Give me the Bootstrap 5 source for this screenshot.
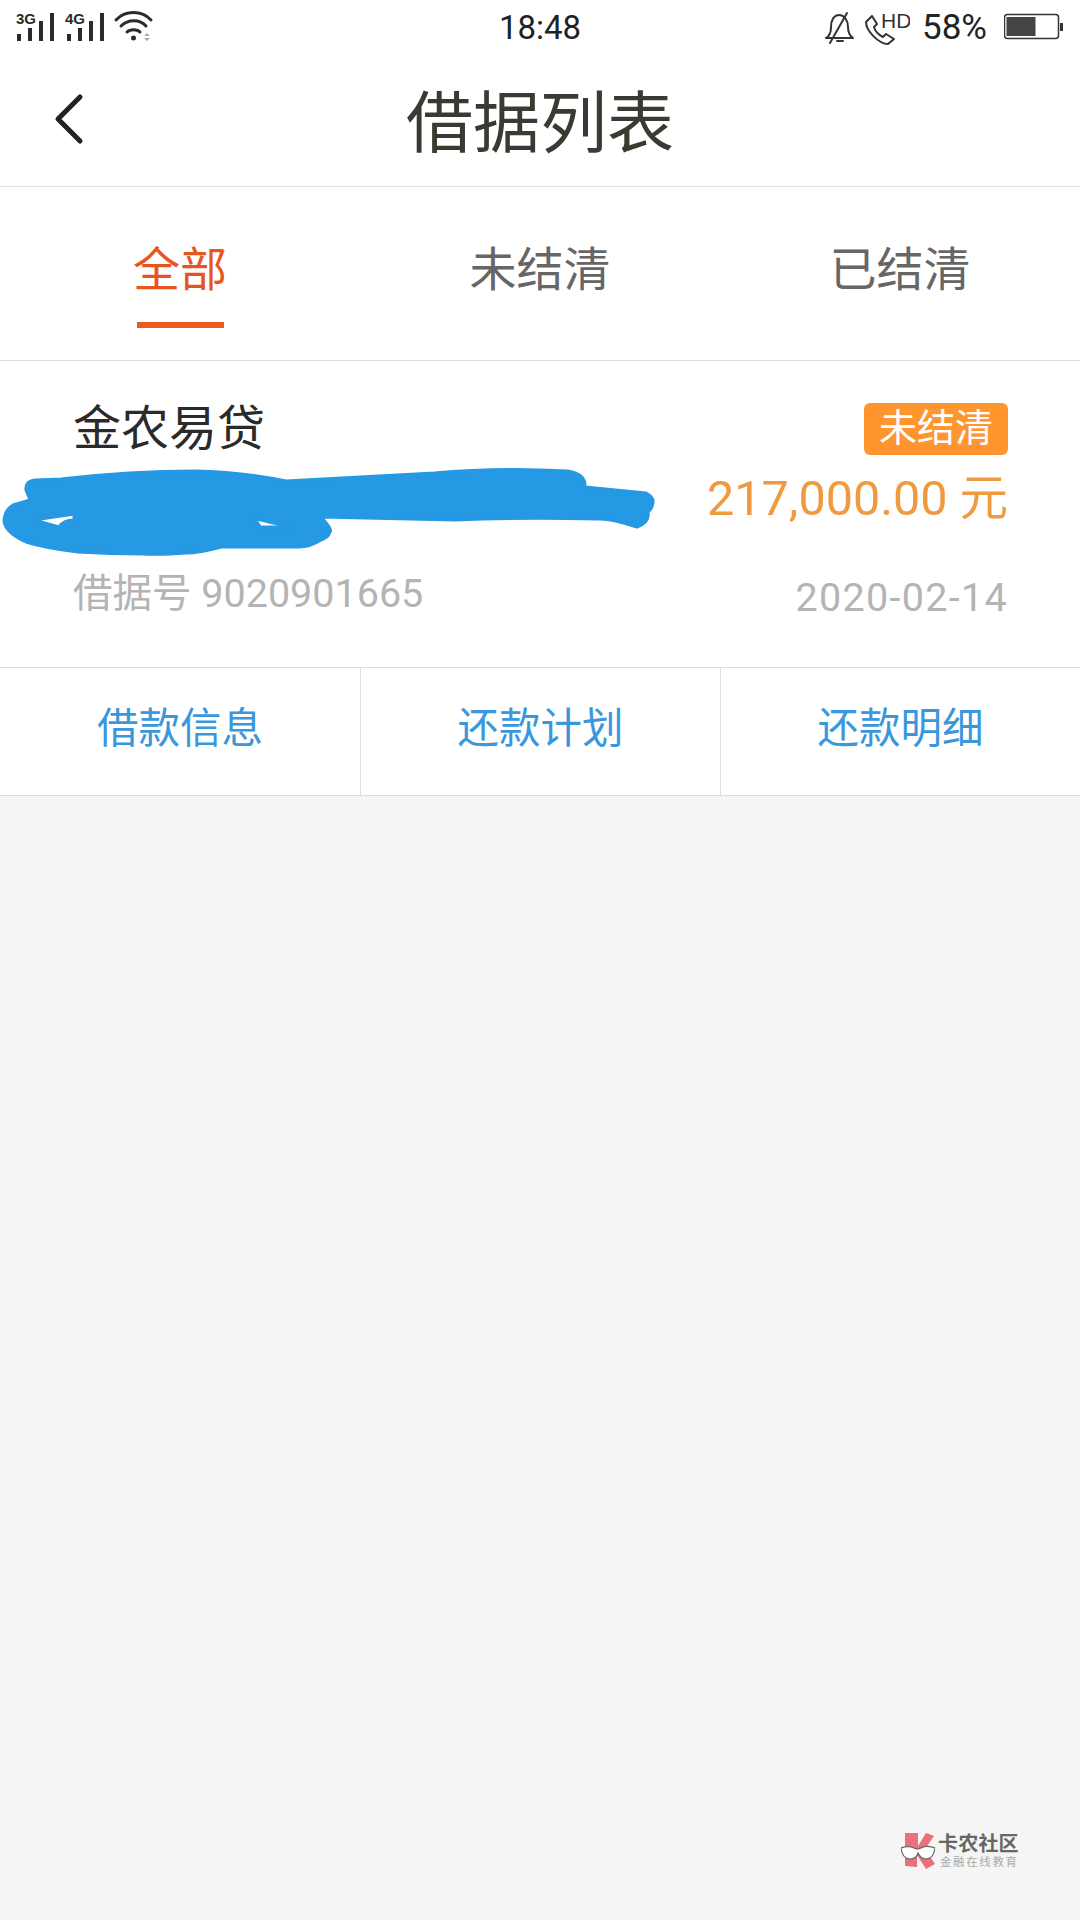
<!DOCTYPE html>
<html lang="zh-CN">
<head>
    <meta charset="UTF-8">
    <meta name="viewport" content="width=device-width, initial-scale=1.0">
    <title>借据列表</title>
    <link href="https://cdn.jsdelivr.net/npm/bootstrap@5.3.0/dist/css/bootstrap.min.css" rel="stylesheet">
    <style>
        body { width: 1080px; height: 1920px; background: #f5f5f5; overflow: hidden; position: relative;
            font-family: Roboto, "Noto Sans CJK SC", sans-serif; }
        .status-bar { height: 55px; background: #fff; color: #222; }
        .status-left { width: 360px; padding-left: 16px; }
        .status-time { width: 360px; font-size: 33px; line-height: 62px; text-align: center; }
        .status-right { width: 360px; padding-right: 16px; }
        .status-pct { font-size: 35px; line-height: 55px; margin: 0 17px 0 12px; }
        .title-bar { height: 132px; background: #fff; border-bottom: 1px solid #e2e2e2; position: relative; }
        .title-bar h1 { font-size: 67px; font-weight: 400; color: #3a3a32; margin: 0; line-height: 138px; text-align: center; }
        .back-btn { position: absolute; left: 50px; top: 36px; }
        .tab-bar { height: 174px; background: #fff; border-bottom: 1px solid #dedede; }
        .tab-item { width: 360px; height: 100%; font-size: 47px; color: #666; text-align: center; padding-top: 53px; line-height: 60px; position: relative; }
        .tab-item.on { color: #e8551f; }
        .tab-item.on::after { content: ""; position: absolute; left: 137px; width: 87px; top: 135px; height: 6px; background: #ee5a1e; }
        .loan-box { height: 307px; background: #fff; border-bottom: 1px solid #dedede; padding: 41px 72px 0 73px; }
        .loan-name { font-size: 48px; line-height: 54px; color: #2a2a2a; }
        .loan-tag { height: 52px; width: 144px; background: #ff952f; color: #fff; font-size: 38px; line-height: 50px; text-align: center; border-radius: 6px; }
        .loan-amt { font-size: 48.5px; line-height: 60px; color: #ef9a3e; margin-top: 13px; }
        .loan-meta { font-size: 39.5px; line-height: 50px; color: #b4b4b4; margin-top: 40px; }
        .loan-date { letter-spacing: 1.3px; position: relative; top: 4px; }
        .action-bar { height: 128px; background: #fff; border-bottom: 1px solid #dedede; }
        .action-item { flex: 1; font-size: 41.5px; color: #3b97dc; line-height: 122px; text-align: center; border-right: 1px solid #dedede; }
        .action-item:first-child { flex: 0 0 361px; }
        .action-item:last-child { border-right: 0; }
        .scribble { position: absolute; left: 0; top: 0; pointer-events: none; }
        .wm { position: absolute; left: 901px; top: 1831px; gap: 3px; }
        .wm-a { font-size: 20px; line-height: 22px; font-weight: 700; color: #666; letter-spacing: .2px; }
        .wm-b { font-size: 11.5px; line-height: 14px; color: #aaa; letter-spacing: 1.6px; white-space: nowrap; padding-left: 2px; }
    </style>
</head>
<body>
    <div class="status-bar d-flex align-items-center">
        <div class="status-left d-flex align-items-center">
            <svg width="140" height="55" viewBox="16 0 140 55" fill="#2b2b2b">
                <text x="16" y="24" font-family="Liberation Sans" font-weight="700" font-size="15">3G</text>
                <rect x="17" y="34" width="4" height="7"/><rect x="28" y="28" width="4" height="13"/><rect x="39" y="21" width="4" height="20"/><rect x="50" y="13" width="4" height="28"/>
                <text x="65" y="24" font-family="Liberation Sans" font-weight="700" font-size="15">4G</text>
                <rect x="67" y="34" width="4" height="7"/><rect x="78" y="28" width="4" height="13"/><rect x="89" y="21" width="4" height="20"/><rect x="100" y="13" width="4" height="28"/>
                <g fill="none" stroke="#2b2b2b" stroke-width="3" stroke-linecap="round">
                    <path d="M116 20C125 10 142 10 151 20"/><path d="M121 26C128 19 140 19 146 26"/><path d="M127 32C130 29 137 29 140 32"/>
                </g>
                <circle cx="133.500" cy="38" r="2.500"/>
                <path d="M144 36l3-3 3 3zM144 38h6l-3 3z" fill="#aaa"/>
            </svg>
        </div>
        <div class="status-time">18:48</div>
        <div class="status-right d-flex align-items-center justify-content-end">
            <svg width="86" height="55" viewBox="824 0 86 55" fill="none" stroke="#333" stroke-width="2" stroke-linecap="round" stroke-linejoin="round">
                <path d="M826 38c4-2 5-5 5-11 0-7 3-12 8-12s9 5 9 12c0 6 2 9 5 11z"/>
                <path d="M830 43L847 13"/><path d="M837 41h6"/>
                <path d="M866 22l6-6 5 8-3 3c1 4 5 8 9 10l3-3 8 5-6 5c-9 0-22-13-22-22z"/>
                <text x="881" y="28" font-family="Liberation Sans" font-size="21" fill="#333" stroke="none">HD</text>
            </svg>
            <span class="status-pct">58%</span>
            <svg width="60" height="55" viewBox="1005 0 60 55">
                <rect x="1005.500" y="14.500" width="54" height="24" rx="3" fill="none" stroke="#333" stroke-width="1.500"/>
                <rect x="1007.500" y="17" width="29" height="19" fill="#444"/>
                <rect x="1061" y="23" width="3" height="8" fill="#333"/>
            </svg>
        </div>
    </div>

    <div class="title-bar">
        <a class="back-btn" href="#">
            <svg width="40" height="60" viewBox="50 91 40 60" fill="none" stroke="#222" stroke-width="5" stroke-linecap="round" stroke-linejoin="round">
                <path d="M80 97L58 119L80 141"/>
            </svg>
        </a>
        <h1>借据列表</h1>
    </div>

    <div class="tab-bar d-flex">
        <div class="tab-item on">全部</div>
        <div class="tab-item">未结清</div>
        <div class="tab-item">已结清</div>
    </div>

    <div class="loan-box">
        <div class="d-flex justify-content-between align-items-center">
            <div class="loan-name">金农易贷</div>
            <div class="loan-tag">未结清</div>
        </div>
        <div class="loan-amt text-end">217,000.00 元</div>
        <div class="loan-meta d-flex justify-content-between">
            <span>借据号 9020901665</span>
            <span class="loan-date">2020-02-14</span>
        </div>
    </div>

    <div class="action-bar d-flex">
        <div class="action-item">借款信息</div>
        <div class="action-item">还款计划</div>
        <div class="action-item">还款明细</div>
    </div>

    <svg class="scribble" width="1080" height="700" viewBox="0 0 1080 700">
        <path fill="#2599e3" fill-rule="evenodd" stroke="#2599e3" stroke-width="3" stroke-linejoin="round"
            d="M26 490Q25 481 35 480L61 479Q130 471 195 471Q243 472 286 481L434 473Q499 467 568 471Q586 474 585 487L646 493Q654 497 653 503Q652 509 648 512Q650 522 637 527Q610 518 598 519Q520 517 455 520L321 517Q333 530 330 532Q328 538 321 540Q310 547 299 547H221Q200 553 186 553Q160 555 143 554Q110 554 78 552Q45 548 26 542Q4 532 4 520Q5 510 13 505L30 500ZM34 520L74 514V520Q63 520 59 527ZM252 518Q262 520 269 522L291 527H260Q258 522 252 518Z"/>
    </svg>

    <div class="wm d-flex align-items-center">
        <svg width="34" height="40" viewBox="901 1831 34 40">
            <path d="M905 1833h13v13l8-13 8 3-9 13 10 15-9 5-9-14v12l-12-1z" fill="#e9707c"/>
            <path d="M901 1848c5-2 9-2 13 0 2 1 5 1 7 0 4-2 9-2 14 0-1 7-4 11-9 11-3 0-6-2-8-6-1 4-4 6-8 6-5 0-8-4-9-11z" fill="#fff" stroke="#666" stroke-width="1.200"/>
        </svg>
        <div>
            <div class="wm-a">卡农社区</div>
            <div class="wm-b">金融在线教育</div>
        </div>
    </div>

    <script src="https://cdn.jsdelivr.net/npm/bootstrap@5.3.0/dist/js/bootstrap.bundle.min.js"></script>
</body>
</html>
